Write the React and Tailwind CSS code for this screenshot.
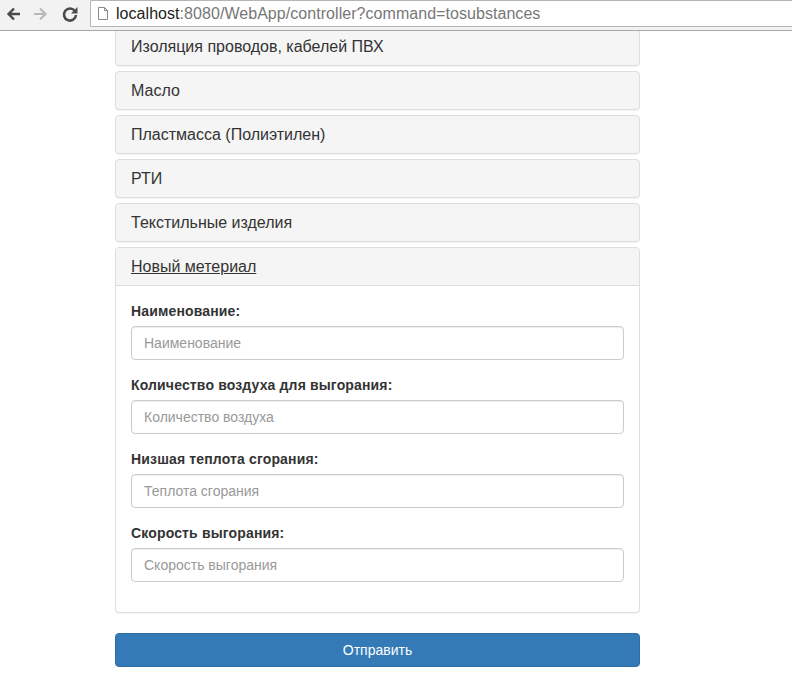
import React from 'react';

const items = [
  'Изоляция проводов, кабелей ПВХ',
  'Масло',
  'Пластмасса (Полиэтилен)',
  'РТИ',
  'Текстильные изделия',
];

const fields = [
  ['Наименование:', 'Наименование'],
  ['Количество воздуха для выгорания:', 'Количество воздуха'],
  ['Низшая теплота сгорания:', 'Теплота сгорания'],
  ['Скорость выгорания:', 'Скорость выгорания'],
];

function Toolbar() {
  return (
    <div className="h-[31px] shrink-0 bg-[#f2f2f2] border-b border-[#a8a8a8] flex items-start relative z-10">
      <div className="flex items-center h-[27px] pl-[5px] w-[90px]">
        {/* back */}
        <svg width="18" height="18" viewBox="0 0 18 18">
          <path d="M15 9H4M9 3.5L3.5 9 9 14.5" fill="none" stroke="#4a4a4a" strokeWidth="2.4" />
        </svg>
        {/* forward */}
        <svg width="18" height="18" viewBox="0 0 18 18" className="ml-[8px]">
          <path d="M3 9h11M9 3.5L14.5 9 9 14.5" fill="none" stroke="#b9b9b9" strokeWidth="2.2" />
        </svg>
        {/* reload */}
        <svg width="18" height="18" viewBox="0 0 18 18" className="ml-[12px]">
          <path d="M14 6.2A6 6 0 1 0 15 10" fill="none" stroke="#4a4a4a" strokeWidth="2.6" />
          <path d="M16.5 2v6.5H10z" fill="#4a4a4a" />
        </svg>
      </div>
      <div className="flex-1 h-[27px] bg-white border border-[#b5b5b5] border-r-0 rounded-l-[2px] flex items-center pl-[6px] gap-[7px]">
        <svg width="12" height="15" viewBox="0 0 12 15">
          <path d="M1.5 1.5h6l3 3v9h-9z" fill="#fff" stroke="#8a8a8a" strokeWidth="1" />
          <path d="M7.5 1.5v3h3" fill="none" stroke="#8a8a8a" strokeWidth="1" />
        </svg>
        <span className="text-[16px] tracking-[0.05px] text-[#777] whitespace-nowrap">
          <span className="text-[#222]">localhost</span>:8080/WebApp/controller?command=tosubstances
        </span>
      </div>
    </div>
  );
}

export default function App() {
  return (
    <div className="w-[792px] h-[682px] bg-white overflow-hidden flex flex-col font-['Liberation_Sans',Arial,sans-serif] text-[#333]">
      <Toolbar />
      <div className="flex-1 overflow-hidden">
        <div className="ml-[115px] w-[525px] -mt-[4px]">
          {/* Группа панелей */}
          <div className="flex flex-col gap-[5px]">
            {items.map((t) => (
              <div key={t} className="border border-[#ddd] rounded-[4px] bg-[#f5f5f5] shadow-[0_1px_1px_rgba(0,0,0,0.05)]">
                <div className="px-[15px] py-[10px] text-[16px] leading-[17px]">{t}</div>
              </div>
            ))}
            <div className="border border-[#ddd] rounded-[4px] bg-white shadow-[0_1px_1px_rgba(0,0,0,0.05)]">
              <div className="px-[15px] py-[10px] text-[16px] leading-[17px] bg-[#f5f5f5] border-b border-[#ddd] rounded-t-[3px]">
                <a className="underline text-[#333]">Новый метериал</a>
              </div>
              <div className="p-[15px]">
                {fields.map(([label, ph]) => (
                  <div key={label} className="mb-[15px]">
                    <label className="block mb-[5px] text-[14px] leading-[20px] font-bold tracking-[0.15px]">{label}</label>
                    <input
                      placeholder={ph}
                      className="block w-full h-[34px] px-[12px] py-[6px] text-[14px] border border-[#ccc] rounded-[4px] shadow-[inset_0_1px_1px_rgba(0,0,0,0.075)] placeholder:text-[#999] outline-none"
                    />
                  </div>
                ))}
              </div>
            </div>
          </div>
          <button className="mt-[20px] w-full h-[34px] bg-[#337ab7] border border-[#2e6da4] rounded-[4px] text-white text-[14px]">
            Отправить
          </button>
        </div>
      </div>
    </div>
  );
}
